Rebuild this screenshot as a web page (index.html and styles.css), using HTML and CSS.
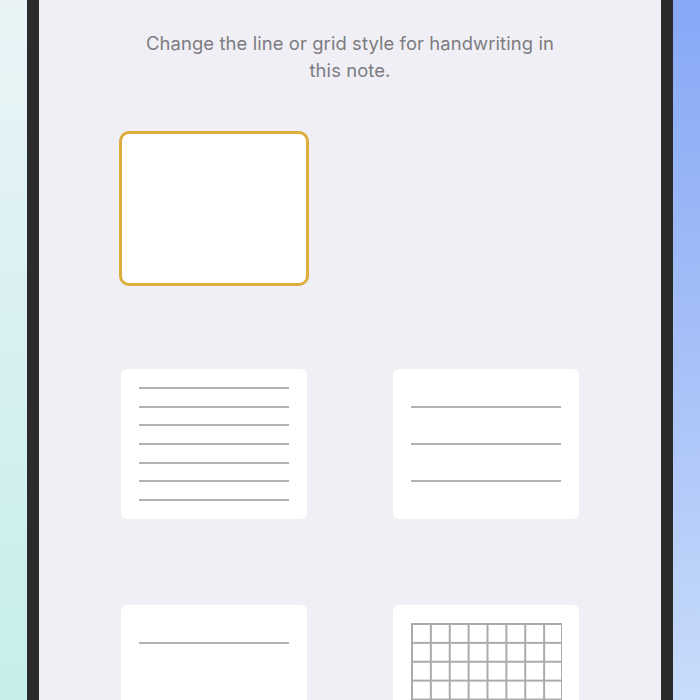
FILE: index.html
```html
<!DOCTYPE html>
<html>
<head>
<meta charset="utf-8">
<link rel="stylesheet" href="styles.css">
</head>
<body>
<div class="screen">
  <div class="side side-left"></div>
  <div class="bezel"></div>
  <main class="panel">
    <p class="desc">Change the line or grid style for handwriting in this note.</p>
    <div class="options">
      <div class="cell"><div class="card selected"></div></div>
      <div class="cell"></div>
      <div class="cell">
        <div class="card lines narrow">
          <span class="rule"></span><span class="rule"></span><span class="rule"></span><span class="rule"></span><span class="rule"></span><span class="rule"></span><span class="rule"></span>
        </div>
      </div>
      <div class="cell">
        <div class="card lines wide">
          <span class="rule"></span><span class="rule"></span><span class="rule"></span>
        </div>
      </div>
      <div class="cell">
        <div class="card lines single">
          <span class="rule"></span>
        </div>
      </div>
      <div class="cell">
        <div class="card gridcard"><div class="grid"></div></div>
      </div>
    </div>
  </main>
  <div class="bezel"></div>
  <div class="side side-right"></div>
</div>
</body>
</html>
```
FILE: styles.css
```css
html, body {
  margin: 0;
  padding: 0;
  height: 100%;
  overflow: hidden;
}
body {
  font-family: Inter, "Noto Sans", sans-serif;
}
.screen {
  display: flex;
  height: 700px;
  width: 700px;
}
.side {
  width: 27px;
  flex: none;
}
.side-left {
  background: linear-gradient(to bottom, #eaf4f7 0%, #d8f1f0 50%, #c6efea 100%);
}
.side-right {
  background: linear-gradient(to bottom, #86a8f6 0%, #a6c0f8 50%, #c9dcfb 100%);
}
.bezel {
  width: 12px;
  flex: none;
  background: #2b2b2b;
}
.panel {
  flex: 1;
  background: #f0eff5;
  padding-top: 30px;
  box-sizing: border-box;
  overflow: hidden;
}
.desc {
  margin: 0 auto;
  width: 425px;
  text-align: center;
  font-size: 18.4px;
  line-height: 27px;
  color: #7c7c81;
  letter-spacing: 0.1px;
}
.options {
  display: grid;
  grid-template-columns: 186px 186px;
  grid-auto-rows: 150px;
  column-gap: 86px;
  row-gap: 86px;
  justify-content: center;
  margin-top: 49px;
}
.cell {
  display: flex;
  align-items: center;
  justify-content: center;
}
.card {
  width: 186px;
  height: 150px;
  background: #ffffff;
  border-radius: 6px;
  box-sizing: border-box;
  flex: none;
}
.card.selected {
  width: 190px;
  height: 155px;
  border: 3px solid #dcaf3c;
  border-radius: 10px;
}
.lines {
  display: flex;
  flex-direction: column;
  justify-content: space-between;
  padding: 18px 18px;
}
.lines.wide {
  padding: 37px 18px;
}
.lines.single {
  justify-content: flex-start;
  padding: 37px 18px;
}
.rule {
  display: block;
  height: 2px;
  background: #b2b2b2;
}
.gridcard {
  padding: 18px 18px 0;
  overflow: hidden;
}
.grid {
  width: 151px;
  height: 113.5px;
  box-sizing: border-box;
  border-right: 1.5px solid #ababab;
  background-image:
    linear-gradient(to right, #ababab 1.5px, transparent 1.5px),
    linear-gradient(to bottom, #ababab 1.5px, transparent 1.5px);
  background-size: 18.875px 18.875px;
}
```
